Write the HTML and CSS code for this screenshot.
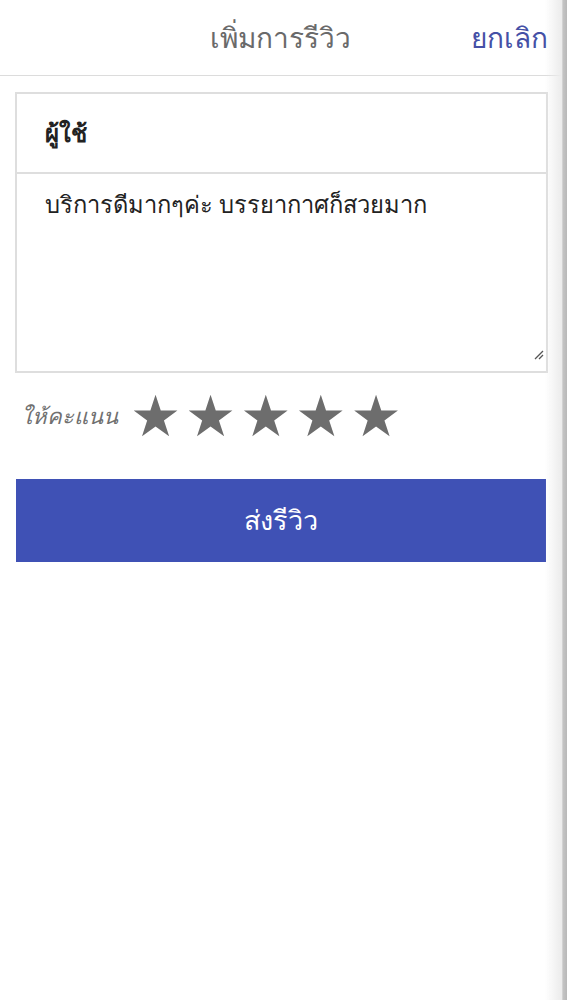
FILE: index.html
```html
<!DOCTYPE html>
<html lang="th">
<head>
<meta charset="utf-8">
<link rel="stylesheet" href="styles.css">
</head>
<body>
<div class="page">
  <header class="topbar">
    <div class="side"></div>
    <h1 class="title">เพิ่มการรีวิว</h1>
    <a class="cancel">ยกเลิก</a>
  </header>
  <main class="content">
    <div class="card">
      <div class="user">ผู้ใช้</div>
      <div class="review">
        <p class="review-text">บริการดีมากๆค่ะ บรรยากาศก็สวยมาก</p>
        <svg class="grip" viewBox="0 0 12 12" width="12" height="12"><path d="M11 3 L3 11 M11 7 L7 11" stroke="#555" stroke-width="1.3" fill="none"/></svg>
      </div>
    </div>
    <div class="rating">
      <span class="rating-label">ให้คะแนน</span>
      <div class="stars">
        <span class="star">★</span><span class="star">★</span><span class="star">★</span><span class="star">★</span><span class="star">★</span>
      </div>
    </div>
    <button class="submit">ส่งรีวิว</button>
  </main>
  <div class="edge"></div>
</div>
</body>
</html>
```

FILE: styles.css
```css
* { box-sizing: border-box; }
html, body { margin: 0; padding: 0; background: #fff; }
body { font-family: "Noto Sans", "DejaVu Sans", sans-serif; }
.page { width: 567px; min-height: 1000px; position: relative; }
.topbar {
  height: 76px;
  border-bottom: 1px solid #dcdcdc;
  display: grid;
  grid-template-columns: 1fr auto 1fr;
  align-items: center;
  padding: 0 19px 0 12px;
}
.title {
  margin: 0;
  font-size: 28px;
  font-weight: normal;
  color: #6a6a6a;
}
.cancel {
  justify-self: end;
  font-size: 28px;
  color: #4550a6;
}
.content { padding: 16px 20px 0 15px; }
.card {
  border: 2px solid #dedede;
  width: 533px;
}
.user {
  height: 80px;
  border-bottom: 2px solid #dedede;
  display: flex;
  align-items: center;
  padding-left: 28px;
  font-size: 24px;
  font-weight: bold;
  color: #222;
}
.review {
  height: 197px;
  position: relative;
  padding: 12px 28px;
}
.review-text { margin: 0; font-size: 23.7px; color: #222; }
.grip { position: absolute; right: 2px; bottom: 11px; }
.rating {
  display: flex;
  align-items: center;
  margin-top: 18px;
  padding-left: 6px;
  height: 50px;
}
.rating-label {
  font-size: 22px;
  font-style: italic;
  color: #707070;
  margin-right: 12px;
}
.stars { display: flex; gap: 4px; }
.star { font-family: "DejaVu Sans", sans-serif; font-size: 57px; line-height: 1; color: #6d6d6d; }
.submit {
  display: block;
  margin-top: 38px;
  margin-left: 1px;
  width: 530px;
  height: 83px;
  border: none;
  background: #3f51b5;
  color: #fff;
  font-family: inherit;
  font-size: 27px;
}
.edge {
  position: fixed;
  top: 0; right: 0;
  width: 22px; height: 100%;
  background: linear-gradient(to right, rgba(255,255,255,0) 0%, #ececec 75%, #c4c4c4 82%, #b8b8b8 100%);
}
```
